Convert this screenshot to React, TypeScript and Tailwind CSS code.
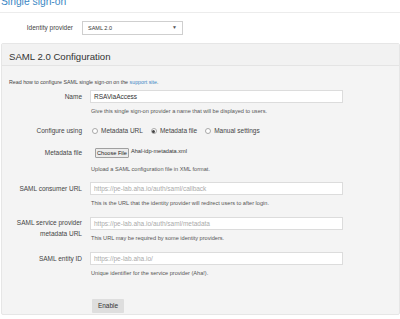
import React from "react";

const font = { fontFamily: '"Liberation Sans", Arial, sans-serif' };

function Radio({ checked, label }: { checked?: boolean; label: string }) {
  return (
    <label className="flex items-center gap-[2px]">
      <span className="flex h-[6px] w-[6px] items-center justify-center rounded-full border border-[#a9a9a9] bg-white">
        {checked && <span className="h-[3px] w-[3px] rounded-full bg-[#444]" />}
      </span>
      <span className="ml-[1px]">{label}</span>
    </label>
  );
}

function Field({
  label,
  children,
  help,
  className = "",
  labelClass = "leading-[13px]",
  helpGap = "mt-[4px]",
}: {
  label: React.ReactNode;
  children: React.ReactNode;
  help?: string;
  className?: string;
  labelClass?: string;
  helpGap?: string;
}) {
  return (
    <div className={`grid grid-cols-[80px_1fr] gap-x-[8px] ${className}`}>
      <div className={`text-right text-[6.5px] text-[#444] ${labelClass}`}>{label}</div>
      <div>
        {children}
        {help && (
          <p className={`${helpGap} pl-[1px] text-[5.6px] leading-[8px] text-[#555]`}>{help}</p>
        )}
      </div>
    </div>
  );
}

function TextBox({ value, placeholder }: { value?: string; placeholder?: string }) {
  return (
    <div className="flex h-[13px] w-[253px] items-center border border-[#dcdcdc] bg-white px-[3px] text-[6.5px]">
      {value ? (
        <span className="text-[#333]">{value}</span>
      ) : (
        <span className="text-[#aaa]">{placeholder}</span>
      )}
    </div>
  );
}

export default function App() {
  return (
    <div className="flex h-[319px] w-[400px] flex-col overflow-hidden bg-white" style={font}>
      <div className="flex h-[13px] flex-col border-b border-[#ececec]">
        <h1 className="-mt-[5px] pl-[1px] text-[10.3px] leading-[13px] text-[#3a87c4]">
          Single sign-on
        </h1>
      </div>

      <div className="mt-[8px] flex items-center">
        <span className="w-[73px] text-right text-[6.5px] text-[#444]">Identity provider</span>
        <div className="ml-[9px] flex h-[14px] w-[101px] items-center justify-between border border-[#cfcfcf] bg-white px-[5px] text-[5.5px] text-[#333]">
          <span>SAML 2.0</span>
          <span className="text-[5px] text-[#555]">▼</span>
        </div>
      </div>

      <div className="ml-[1px] mt-[8px] h-[272px] shrink-0 rounded-[2px] border border-[#e6e6e6] bg-[#f4f4f4]">
        <div className="h-[22px] border-b border-[#e4e4e4] bg-[#f2f2f2] pl-[7px] pt-[7px] text-[9.6px] leading-[12px] text-[#333]">
          SAML 2.0 Configuration
        </div>

        <p className="mt-[12px] pl-[7px] text-[5.3px] leading-[8px] text-[#444]">
          Read how to configure SAML single sign-on on the{" "}
          <span className="text-[#3a87c4]">support site</span>.
        </p>

        <Field
          className="mt-[4px]"
          label="Name"
          help="Give this single sign-on provider a name that will be displayed to users."
        >
          <TextBox value="RSAViaAccess" />
        </Field>

        <Field className="mt-[11px]" label="Configure using" labelClass="leading-[10px]">
          <div className="flex h-[10px] items-center gap-[8px] pl-[2px] text-[6.5px] text-[#444]">
            <Radio label="Metadata URL" />
            <Radio checked label="Metadata file" />
            <Radio label="Manual settings" />
          </div>
        </Field>

        <Field
          className="mt-[12px]"
          label="Metadata file"
          labelClass="leading-[10px]"
          helpGap="mt-[7px]"
          help="Upload a SAML configuration file in XML format."
        >
          <div className="flex h-[10px] items-center pl-[5px]">
            <span className="flex h-[10px] w-[34px] items-center justify-center rounded-[1px] border border-[#a0a0a0] bg-[#ececec] text-[5.6px] text-[#222]">
              Choose File
            </span>
            <span className="-mt-[4px] ml-[2px] text-[5.6px] text-[#333]">Ahal-idp-metadata.xml</span>
          </div>
        </Field>

        <Field
          className="mt-[9px]"
          label="SAML consumer URL"
          help="This is the URL that the identity provider will redirect users to after login."
        >
          <TextBox placeholder="https://pe-lab.aha.io/auth/saml/callback" />
        </Field>

        <Field
          className="mt-[10px]"
          label={
            <>
              SAML service provider
              <br />
              metadata URL
            </>
          }
          labelClass="leading-[10.5px] pt-[1px]"
          help="This URL may be required by some identity providers."
        >
          <TextBox placeholder="https://pe-lab.aha.io/auth/saml/metadata" />
        </Field>

        <Field
          className="mt-[10px]"
          label="SAML entity ID"
          help="Unique identifier for the service provider (Aha!)."
        >
          <TextBox placeholder="https://pe-lab.aha.io/" />
        </Field>

        <div className="mt-[14px] pl-[90px]">
          <button className="h-[14px] w-[32px] rounded-[1px] bg-[#dedede] text-[6.5px] text-[#333]">
            Enable
          </button>
        </div>
      </div>
    </div>
  );
}
